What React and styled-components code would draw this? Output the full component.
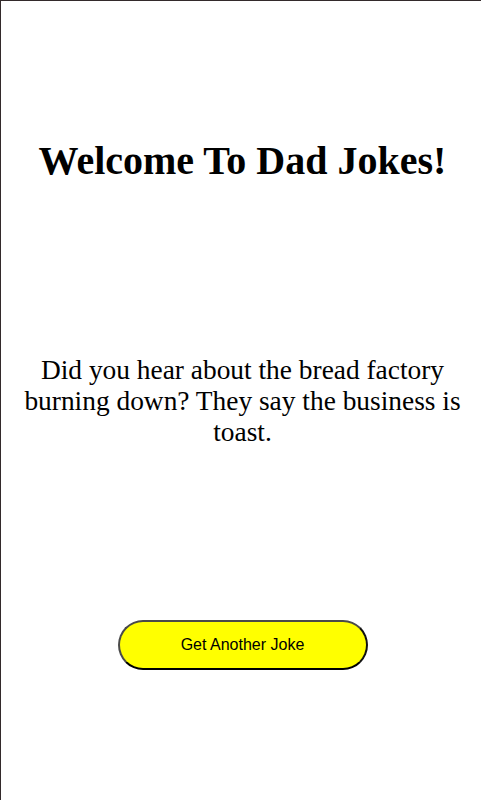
import React from 'react';
import styled, { createGlobalStyle } from 'styled-components';

const GlobalStyle = createGlobalStyle`
  html, body {
    margin: 0;
    padding: 0;
    background: #fff;
  }
  body {
    font-family: 'Liberation Serif', 'Times New Roman', serif;
    overflow: hidden;
  }
`;

const Page = styled.div`
  box-sizing: border-box;
  min-height: 100vh;
  border-top: 1px solid #332a2b;
  border-left: 1px solid #332a2b;
  padding: 136px 0 0 3px;
  display: flex;
  flex-direction: column;
  align-items: center;
  text-align: center;
`;

const Title = styled.h1`
  margin: 0;
  font-size: 40px;
  font-weight: bold;
  color: #000;
`;

const Joke = styled.p`
  margin: 171px 0 0;
  max-width: 450px;
  font-size: 27.4px;
  line-height: 31px;
  color: #000;
`;

const JokeButton = styled.button`
  margin-top: 172px;
  width: 250px;
  height: 50px;
  border-radius: 25px;
  border: 2px solid;
  border-color: #4a4a4a #111 #000 #4a4a4a;
  background: #ffff00;
  font-family: 'Liberation Sans', Arial, sans-serif;
  font-size: 16px;
  color: #000;
  cursor: pointer;
`;

const App = () => (
  <>
    <GlobalStyle />
    <Page>
      <Title>Welcome To Dad Jokes!</Title>
      <Joke>
        Did you hear about the bread factory burning down? They say the
        business is toast.
      </Joke>
      <JokeButton>Get Another Joke</JokeButton>
    </Page>
  </>
);

export default App;
